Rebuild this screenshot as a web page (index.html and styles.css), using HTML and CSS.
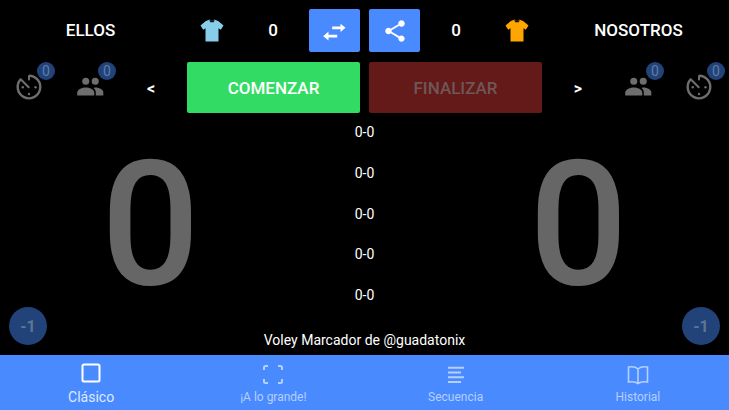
FILE: index.html
```html
<!DOCTYPE html>
<html lang="es">
<head>
<meta charset="utf-8">
<title>Voley Marcador</title>
<link rel="stylesheet" href="styles.css">
</head>
<body>
<svg class="defs" width="0" height="0" aria-hidden="true">
  <defs>
    <symbol id="shirt" viewBox="0 0 24 24"><path d="M5.500 3.200 9 1.800h1.200c.4 1.200 3.200 1.200 3.600 0H15l3.500 1.400 5 4.300-2.700 4.200-2.300-1.500V23.500H5.500V10.200L3.200 11.700.5 7.500z"/><path class="collar" d="M9.200 2.300h5.600l-1.100 2h-3.400z"/></symbol>
    <symbol id="timer" viewBox="0 0 28 28"><path class="ring" d="M14 2.700a11.300 11.300 0 1 1-8.300 3.600"/><path class="ring hand" d="M14 3v3.500M5.700 6.300l8 8"/><circle cx="7.800" cy="14.300" r="1.200"/><circle cx="14" cy="21" r="1.200"/><circle cx="20.500" cy="14.300" r="1.200"/></symbol>
    <symbol id="people" viewBox="0 0 28 20"><circle cx="9" cy="4.500" r="3.700"/><circle cx="19" cy="4.500" r="3.700"/><path d="M0 19.500v-3c0-3.600 5.500-5.500 9-5.500s9 1.900 9 5.500v3z"/><path d="M19.600 19.500v-3.300c0-2-1-3.500-2.300-4.700.6-.2 1.300-.4 1.900-.4 3.300 0 8.300 1.700 8.300 5.100v3.300z"/></symbol>
  </defs>
</svg>
<main class="app">
  <div class="board">
    <header class="top">
      <div class="team">ELLOS</div>
      <svg class="shirt sky"><use href="#shirt"/></svg>
      <div class="sets">0</div>
      <button class="action swap" aria-label="Intercambiar">
        <svg viewBox="0 0 26 26"><path d="M23.500 9.800 18.500 5.800V8.500H10.200V11.200H18.500V14zM1.200 18.200 6.500 13.500V16.800H15.200V19.500H6.500V22.500z"/></svg>
      </button>
      <button class="action share" aria-label="Compartir">
        <svg viewBox="0 0 24 24"><path d="M18 16.080c-.76 0-1.440.300-1.960.770L8.910 12.700c.050-.230.090-.460.090-.700s-.040-.470-.090-.700l7.050-4.110c.540.500 1.250.810 2.040.810 1.660 0 3-1.340 3-3s-1.340-3-3-3-3 1.340-3 3c0 .240.040.470.090.700L8.040 9.810C7.500 9.310 6.790 9 6 9c-1.660 0-3 1.340-3 3s1.340 3 3 3c.790 0 1.500-.310 2.040-.810l7.120 4.160c-.050.210-.080.430-.080.650 0 1.610 1.310 2.920 2.920 2.920s2.920-1.310 2.920-2.920-1.310-2.920-2.920-2.920z"/></svg>
      </button>
      <div class="sets sets-right">0</div>
      <svg class="shirt amber"><use href="#shirt"/></svg>
      <div class="team">NOSOTROS</div>
    </header>
    <section class="controls">
      <div class="side">
        <div class="stat stat-timer"><svg class="timer"><use href="#timer"/></svg><span class="badge">0</span></div>
        <div class="stat stat-people"><svg class="people"><use href="#people"/></svg><span class="badge">0</span></div>
        <span class="arrow">&lt;</span>
      </div>
      <button class="big start">COMENZAR</button>
      <button class="big finish">FINALIZAR</button>
      <div class="side side-right">
        <span class="arrow">&gt;</span>
        <div class="stat stat-people"><svg class="people"><use href="#people"/></svg><span class="badge">0</span></div>
        <div class="stat stat-timer"><svg class="timer"><use href="#timer"/></svg><span class="badge">0</span></div>
      </div>
    </section>
    <section class="scores">
      <div class="score-col"><div class="score">0</div><button class="minus">-1</button></div>
      <div class="partials">
        <span>0-0</span><span>0-0</span><span>0-0</span><span>0-0</span><span>0-0</span>
      </div>
      <div class="score-col"><div class="score">0</div><button class="minus minus-right">-1</button></div>
    </section>
    <p class="credit">Voley Marcador de @guadatonix</p>
  </div>
  <nav class="tabs">
    <a class="tab active"><svg viewBox="0 0 24 24"><rect x="3.500" y="3.500" width="17" height="17" rx="1.500"/></svg><span>Clásico</span></a>
    <a class="tab"><svg viewBox="0 0 24 24"><path d="M3 9V6.500A1.500 1.500 0 0 1 4.500 5H7M17 5h2.500A1.500 1.500 0 0 1 21 6.500V9M21 18v2.500a1.500 1.500 0 0 1-1.500 1.500H17M7 22H4.500A1.500 1.500 0 0 1 3 20.500V18"/></svg><span>¡A lo grande!</span></a>
    <a class="tab"><svg viewBox="0 0 24 24"><path d="M4 6.700h16M4 11.500h13M4 16.300h16M4 21h13"/></svg><span>Secuencia</span></a>
    <a class="tab"><svg class="book" viewBox="0 0 24 24"><path d="M12 8C10 6 6 5.500 2.500 6v15c3.500-.5 7.500 0 9.500 1.500 2-1.500 6-2 9.500-1.500V6C18 5.500 14 6 12 8zM12 8v14.500"/></svg><span>Historial</span></a>
  </nav>
</main>
</body>
</html>
```

FILE: styles.css
```css
* { box-sizing: border-box; }
html, body { margin: 0; height: 100%; background: #000; }
body { font-family: Roboto, "Liberation Sans", sans-serif; color: #fff; overflow: hidden; }
.defs { position: absolute; }
button { font-family: inherit; border: 0; padding: 0; }
.app { width: 729px; height: 410px; display: flex; flex-direction: column; }
.board { height: 355px; display: flex; flex-direction: column; }

.top { height: 62px; padding-top: 9px; display: flex; align-items: flex-start; flex: none; }
.team { font-size: 17px; font-weight: 500; line-height: 43px; text-align: center; width: 181px; flex: none; }
.shirt { width: 24px; height: 24px; margin: 9px 19px 0; flex: none; }
.sky { fill: #87ceeb; }
.amber { fill: #ffa500; }
.collar { fill: #111; }
.sets { width: 60px; line-height: 43px; font-size: 17px; font-weight: 500; text-align: center; margin-right: 6px; flex: none; }
.sets-right { margin: 0 0 0 6px; }
.action { width: 51px; height: 43px; background: #4a8aff; border-radius: 2px; display: flex; align-items: center; justify-content: center; flex: none; }
.action svg { width: 26px; height: 26px; fill: #fff; }
.share { margin-left: 9px; }

.controls { height: 51px; display: flex; align-items: stretch; flex: none; }
.side { width: 187px; flex: none; display: flex; align-items: center; }
.side-right { padding-left: 7px; }
.side-right .arrow { margin-right: -1px; }
.big { width: 173px; height: 51px; border-radius: 2px; font-size: 17px; font-weight: 500; flex: none; }
.start { background: #32dc64; color: #fff; }
.finish { background: #651a1a; color: #6e5757; margin-left: 9px; }
.arrow { font-size: 16px; font-weight: 700; width: 58px; text-align: center; margin-top: 1px; flex: none; }
.stat { height: 51px; position: relative; display: flex; align-items: center; justify-content: center; flex: none; }
.stat-timer { width: 58px; }
.stat-people { width: 64px; }
.timer { width: 28px; height: 28px; fill: #6e6e6e; margin-top: -2px; }
.ring { fill: none; stroke: #6e6e6e; stroke-width: 2.4; }
.hand { stroke-linecap: round; stroke-width: 2; }
.people { width: 27px; height: 19px; fill: #6e6e6e; margin-top: -2px; }
.badge { position: absolute; top: 0; left: calc(50% + 8px); width: 18px; height: 18px; border-radius: 50%; background: #224379; color: #5f7ba6; font-size: 14px; line-height: 18px; text-align: center; }

.scores { flex: 1; min-height: 0; display: flex; }
.score-col { width: 301px; position: relative; }
.score { font-size: 174px; font-weight: 500; line-height: 214px; padding-top: 5px; text-align: center; color: #666; }
.minus { position: absolute; bottom: -18px; left: 9px; width: 38px; height: 38px; border-radius: 50%; background: #224379; color: #5e7596; font-size: 16px; font-weight: 700; }
.minus-right { left: auto; right: 9px; }
.partials { flex: 1; display: flex; flex-direction: column; align-items: center; gap: 20.75px; padding-top: 9px; font-size: 14px; line-height: 20px; }
.credit { margin: 0; height: 28px; text-align: center; font-size: 14px; line-height: 27px; flex: none; }

.tabs { height: 55px; background: #4a8aff; display: grid; grid-template-columns: repeat(4, 1fr); }
.tab { display: flex; flex-direction: column; align-items: center; padding-top: 6px; font-size: 12px; color: #b5d0ff; }
.tab svg { width: 24px; height: 24px; fill: none; stroke: currentColor; stroke-width: 2; margin-bottom: 5px; }
.tab .book { stroke-width: 1.6; }
.tab.active { color: #fff; font-size: 14px; }
.tab.active span { color: #dfeaff; margin-top: -1px; }
```
